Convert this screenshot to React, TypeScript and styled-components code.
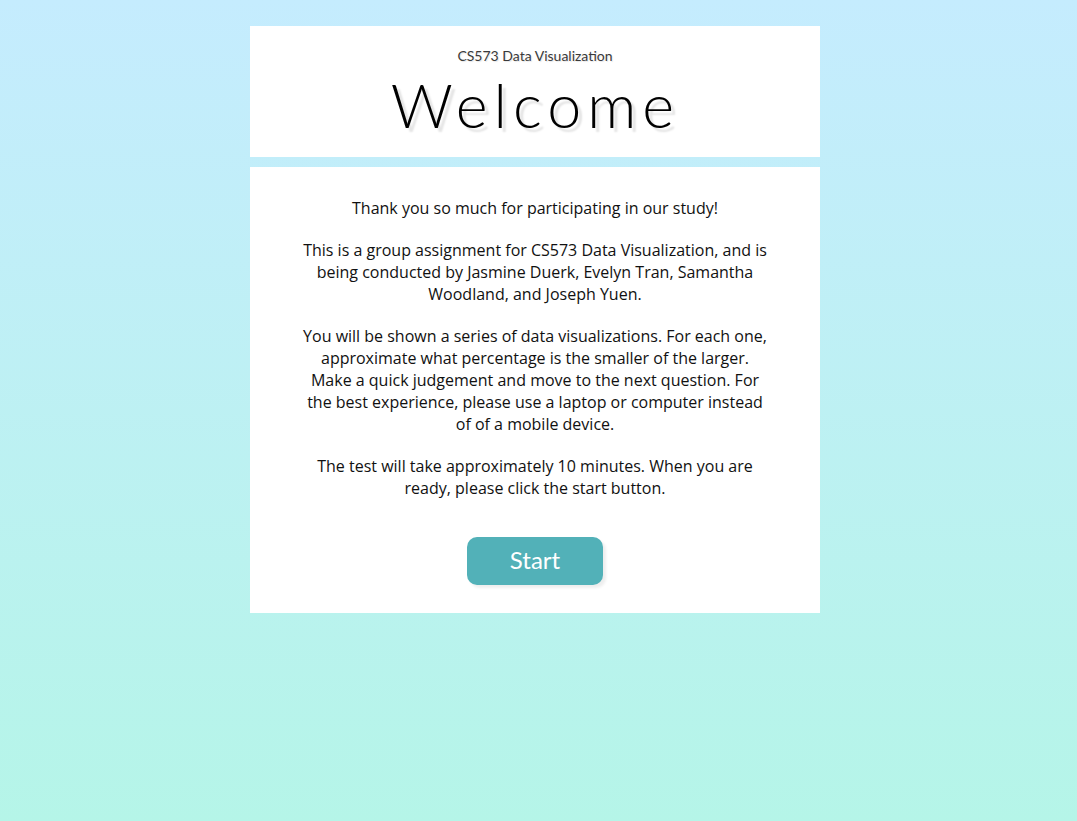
import React from "react";
import styled, { createGlobalStyle } from "styled-components";

const Global = createGlobalStyle`
  html, body { margin: 0; padding: 0; }
  body {
    min-height: 821px;
    padding-right: 7px;
    background: linear-gradient(to bottom, #c5ecfe 0%, #b5f5e8 100%);
    font-family: "Open Sans", sans-serif;
  }
`;

const Page = styled.main`
  width: 570px;
  margin: 0 auto;
  padding-top: 26px;
  display: flex;
  flex-direction: column;
  gap: 10px;
`;

const Card = styled.section`
  background: #ffffff;
  display: flex;
  flex-direction: column;
  align-items: center;
`;

const HeaderCard = styled(Card)`
  height: 131px;
  box-sizing: border-box;
  padding-top: 21px;
`;

const Course = styled.div`
  font-family: "Lato", "Open Sans", sans-serif;
  font-size: 14px;
  font-weight: 400;
  color: #3a3a3a;
  line-height: 18px;
  text-shadow: 1px 1px 1px #e6e6e6;
`;

const Title = styled.h1`
  margin: 7px 0 0 1px;
  font-family: "Lato", sans-serif;
  font-weight: 300;
  font-size: 61px;
  line-height: 66px;
  letter-spacing: 6px;
  color: #000;
  text-shadow: 4px 4px 2px #e4e4e4;
`;

const BodyCard = styled(Card)`
  padding: 30px 50px 28px;
`;

const Paragraph = styled.p`
  margin: 0 0 20px 0;
  font-size: 16px;
  line-height: 22px;
  color: #111;
  text-align: center;
  &:last-of-type { margin-bottom: 38px; }
`;

const StartButton = styled.button`
  width: 136px;
  height: 48px;
  padding: 0 0 3px 0;
  border: none;
  border-radius: 10px;
  background: #52b1b8;
  color: #fff;
  font-family: "Lato", sans-serif;
  font-size: 24px;
  font-weight: 400;
  box-shadow: 3px 3px 3px #eeeeee;
  cursor: pointer;
`;

export default function App() {
  return (
    <>
      <Global />
      <Page>
        <HeaderCard>
          <Course>CS573 Data Visualization</Course>
          <Title>Welcome</Title>
        </HeaderCard>
        <BodyCard>
          <Paragraph>Thank you so much for participating in our study!</Paragraph>
          <Paragraph>
            This is a group assignment for CS573 Data Visualization, and is being conducted by
            Jasmine Duerk, Evelyn Tran, Samantha Woodland, and Joseph Yuen.
          </Paragraph>
          <Paragraph>
            You will be shown a series of data visualizations. For each one, approximate what
            percentage is the smaller of the larger. Make a quick judgement and move to the next
            question. For the best experience, please use a laptop or computer instead of of a
            mobile device.
          </Paragraph>
          <Paragraph>
            The test will take approximately 10 minutes. When you are ready, please click the start
            button.
          </Paragraph>
          <StartButton>Start</StartButton>
        </BodyCard>
      </Page>
    </>
  );
}
